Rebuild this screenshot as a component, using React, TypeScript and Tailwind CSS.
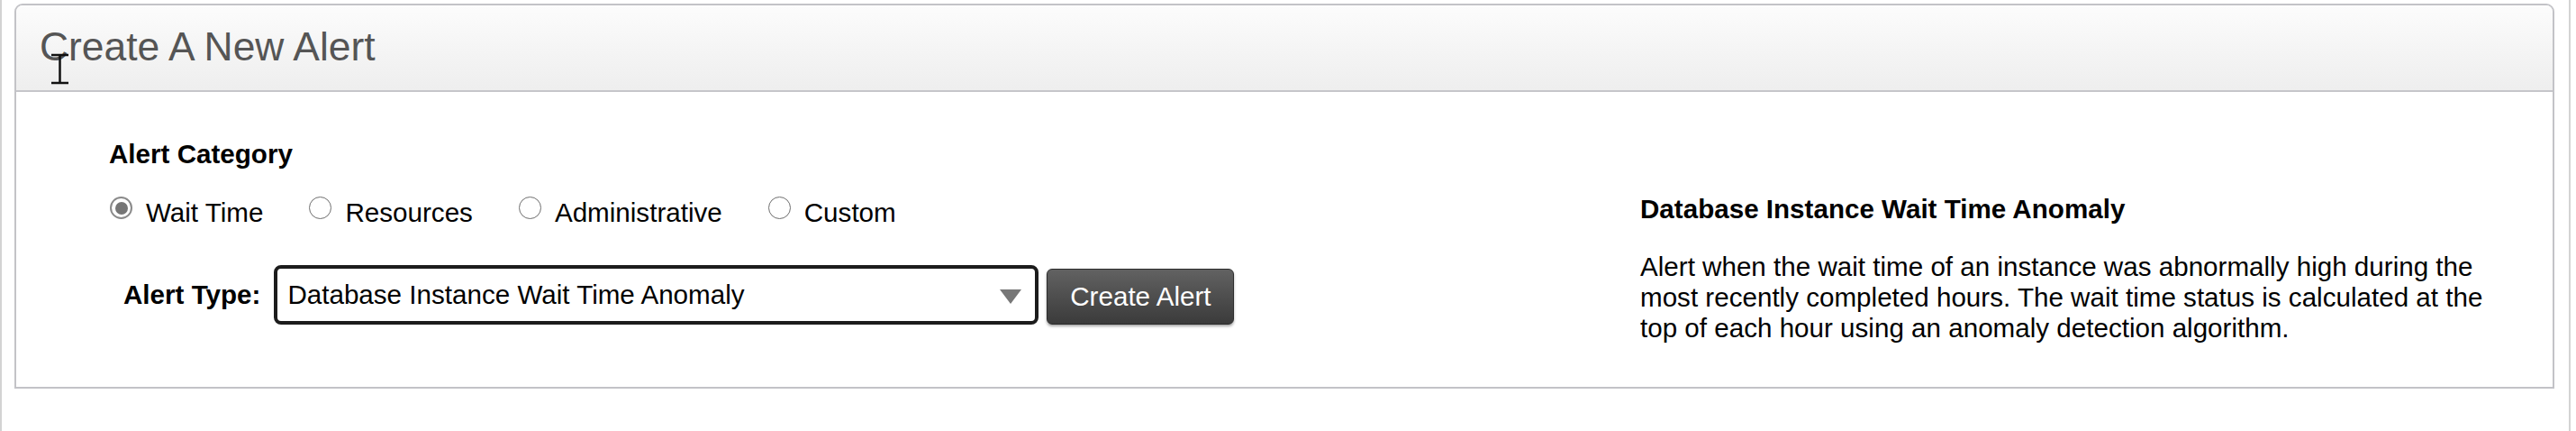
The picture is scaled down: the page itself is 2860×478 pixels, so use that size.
import React from "react";

function Radio({ checked, label }: { checked?: boolean; label: string }) {
  return (
    <label className="flex items-start">
      <span
        className={
          checked
            ? "mt-[-1px] ml-[1px] flex h-[25px] w-[25px] shrink-0 items-center justify-center rounded-full border-[2.5px] border-[#8a8a8a] bg-white"
            : "mt-[-1px] ml-[1px] flex h-[25px] w-[25px] shrink-0 items-center justify-center rounded-full border-[1.5px] border-[#6e6e6e] bg-white"
        }
      >
        {checked && <span className="h-[14px] w-[14px] rounded-full bg-[#767676]" />}
      </span>
      <span className="ml-[15px]">{label}</span>
    </label>
  );
}

export default function App() {
  return (
    <div className="relative h-[478px] w-[2854px] border-x-2 border-[#d3d3d3] bg-white pl-[14px] pt-[4px] font-['Liberation_Sans',Arial,sans-serif] text-black">
      <div className="w-[2820px] rounded-t-[9px] border-2 border-[#c3c3c7]">
        <div className="h-[96px] rounded-t-[7px] border-b-2 border-[#c6c6ca] bg-gradient-to-b from-[#fcfcfc] to-[#eeeeee] pl-[26px] pt-[20px]">
          <h1 className="text-[44.4px] leading-[51px] text-[#555555]">Create A New Alert</h1>
        </div>
        <div className="flex h-[327px] text-[29.6px] leading-[34px]">
          <div className="w-[1803px] pl-[103px] pt-[52px]">
            <div className="font-bold">Alert Category</div>
            <div className="mt-[31px] flex gap-[50px]">
              <Radio checked label="Wait Time" />
              <Radio label="Resources" />
              <Radio label="Administrative" />
              <Radio label="Custom" />
            </div>
            <div className="mt-[41px] flex items-end">
              <span className="ml-[16px] self-center font-bold">Alert Type:</span>
              <div className="ml-[15px] flex h-[66px] w-[849px] items-center justify-between rounded-[8px] border-4 border-[#1c1c1c] bg-white pl-[11px] pr-[15px]">
                <span>Database Instance Wait Time Anomaly</span>
                <svg width="24" height="16" viewBox="0 0 24 16" className="mt-[4px]">
                  <polygon points="0,0 24,0 12,16" fill="#777777" />
                </svg>
              </div>
              <button className="ml-[9px] h-[62px] w-[208px] rounded-[6px] border border-[#2c2c2c] bg-gradient-to-b from-[#626262] to-[#3b3b3b] text-white shadow-[0_2px_3px_rgba(0,0,0,0.35)]">
                Create Alert
              </button>
            </div>
          </div>
          <div className="w-[965px] pt-[113px]">
            <div className="font-bold">Database Instance Wait Time Anomaly</div>
            <p className="mt-[30px]">
              Alert when the wait time of an instance was abnormally high during the most recently completed hours. The wait time status is calculated at the top of each hour using an anomaly detection algorithm.
            </p>
          </div>
        </div>
      </div>
      <svg className="absolute left-[53px] top-[59px]" width="24" height="36" viewBox="0 0 24 36">
        <path d="M2 2 H21 M11.5 2 V33 M2 33 H21" stroke="#111" strokeWidth="2.5" fill="none" />
      </svg>
    </div>
  );
}
